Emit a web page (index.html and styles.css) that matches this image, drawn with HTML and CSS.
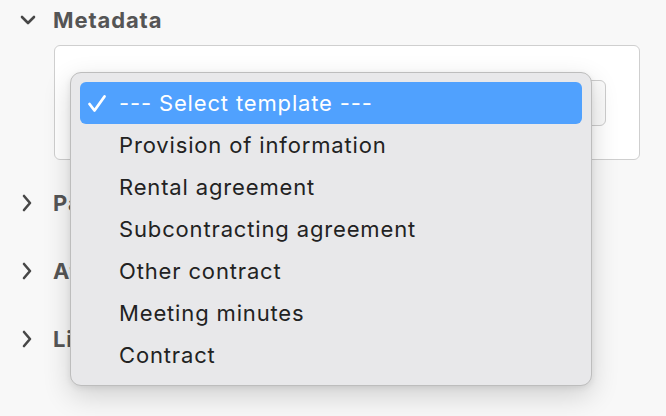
FILE: index.html
```html
<!DOCTYPE html>
<html>
<head>
<meta charset="utf-8">
<link rel="stylesheet" href="styles.css">
</head>
<body>
<div class="page">
  <div class="section open">
    <div class="sec-head">
      <svg class="chev-down" width="16" height="10" viewBox="0 0 16 10"><path d="M2 2 L8 8 L14 2" fill="none" stroke="#474747" stroke-width="2.6" stroke-linecap="round" stroke-linejoin="round"/></svg>
      <span class="sec-title">Metadata</span>
    </div>
    <div class="card">
      <div class="select-btn"><span class="sel-arrow"></span></div>
    </div>
  </div>
  <div class="section">
    <div class="sec-head">
      <svg class="chev-right" width="12" height="20" viewBox="0 0 12 20"><path d="M3 3 L9 10 L3 17" fill="none" stroke="#474747" stroke-width="2.6" stroke-linecap="round" stroke-linejoin="round"/></svg>
      <span class="sec-title">Parties</span>
    </div>
  </div>
  <div class="section">
    <div class="sec-head">
      <svg class="chev-right" width="12" height="20" viewBox="0 0 12 20"><path d="M3 3 L9 10 L3 17" fill="none" stroke="#474747" stroke-width="2.6" stroke-linecap="round" stroke-linejoin="round"/></svg>
      <span class="sec-title">Attachments</span>
    </div>
  </div>
  <div class="section">
    <div class="sec-head">
      <svg class="chev-right" width="12" height="20" viewBox="0 0 12 20"><path d="M3 3 L9 10 L3 17" fill="none" stroke="#474747" stroke-width="2.6" stroke-linecap="round" stroke-linejoin="round"/></svg>
      <span class="sec-title">Links</span>
    </div>
  </div>

  <div class="menu">
    <div class="item selected">
      <svg class="check" width="20" height="19" viewBox="0 0 20 19"><path d="M2.5 10 L7.5 16.5 L17.5 2.5" fill="none" stroke="#fff" stroke-width="2.8" stroke-linecap="round" stroke-linejoin="round"/></svg>
      <span>--- Select template ---</span>
    </div>
    <div class="item"><span>Provision of information</span></div>
    <div class="item"><span>Rental agreement</span></div>
    <div class="item"><span>Subcontracting agreement</span></div>
    <div class="item"><span>Other contract</span></div>
    <div class="item"><span>Meeting minutes</span></div>
    <div class="item"><span>Contract</span></div>
  </div>
</div>
</body>
</html>
```
FILE: styles.css
```css
html, body {
  margin: 0;
  padding: 0;
  background: #f8f8f8;
}
* {
  box-sizing: border-box;
}
body {
  width: 666px;
  height: 416px;
  overflow: hidden;
  font-family: Inter, "Liberation Sans", sans-serif;
}
.page {
  position: relative;
  padding: 0 26px 0 20px;
  display: flex;
  flex-direction: column;
  gap: 28px;
}
.section.open {
  margin-bottom: -5px;
}
.sec-head {
  height: 40px;
  display: flex;
  align-items: center;
  position: relative;
}
.chev-down {
  width: 16px;
  margin-right: 17px;
}
.chev-right {
  width: 12px;
  margin-left: 1px;
  margin-right: 20px;
}
.sec-title {
  font-weight: 700;
  font-size: 22px;
  letter-spacing: 0.9px;
  color: #555;
}
.card {
  margin: 5px 0 0 34px;
  height: 115px;
  background: #fff;
  border: 1px solid #cfcfcf;
  border-radius: 6px;
  padding: 34px 33px 0 16px;
}
.select-btn {
  height: 46px;
  border: 1px solid #cdcdcd;
  border-radius: 6px;
  background: #fafafa;
  position: relative;
}
.sel-arrow {
  position: absolute;
  right: 14px;
  top: 21px;
  width: 3px;
  height: 3px;
  background: #555;
  border-radius: 50%;
}
.menu {
  position: absolute;
  left: 70px;
  top: 72px;
  width: 522px;
  padding: 9px;
  background: #e8e8ea;
  border: 1px solid #bdbdbd;
  border-radius: 11px;
  box-shadow: 0 10px 28px rgba(0,0,0,0.16), 0 2px 6px rgba(0,0,0,0.08);
}
.item {
  height: 42px;
  display: flex;
  align-items: center;
  padding-left: 39px;
  position: relative;
  font-size: 22px;
  letter-spacing: 0.85px;
  color: #222;
  border-radius: 6px;
}
.item.selected {
  background: #50a1fe;
  color: #fff;
}
.check {
  position: absolute;
  left: 7px;
  top: 12px;
}
```
